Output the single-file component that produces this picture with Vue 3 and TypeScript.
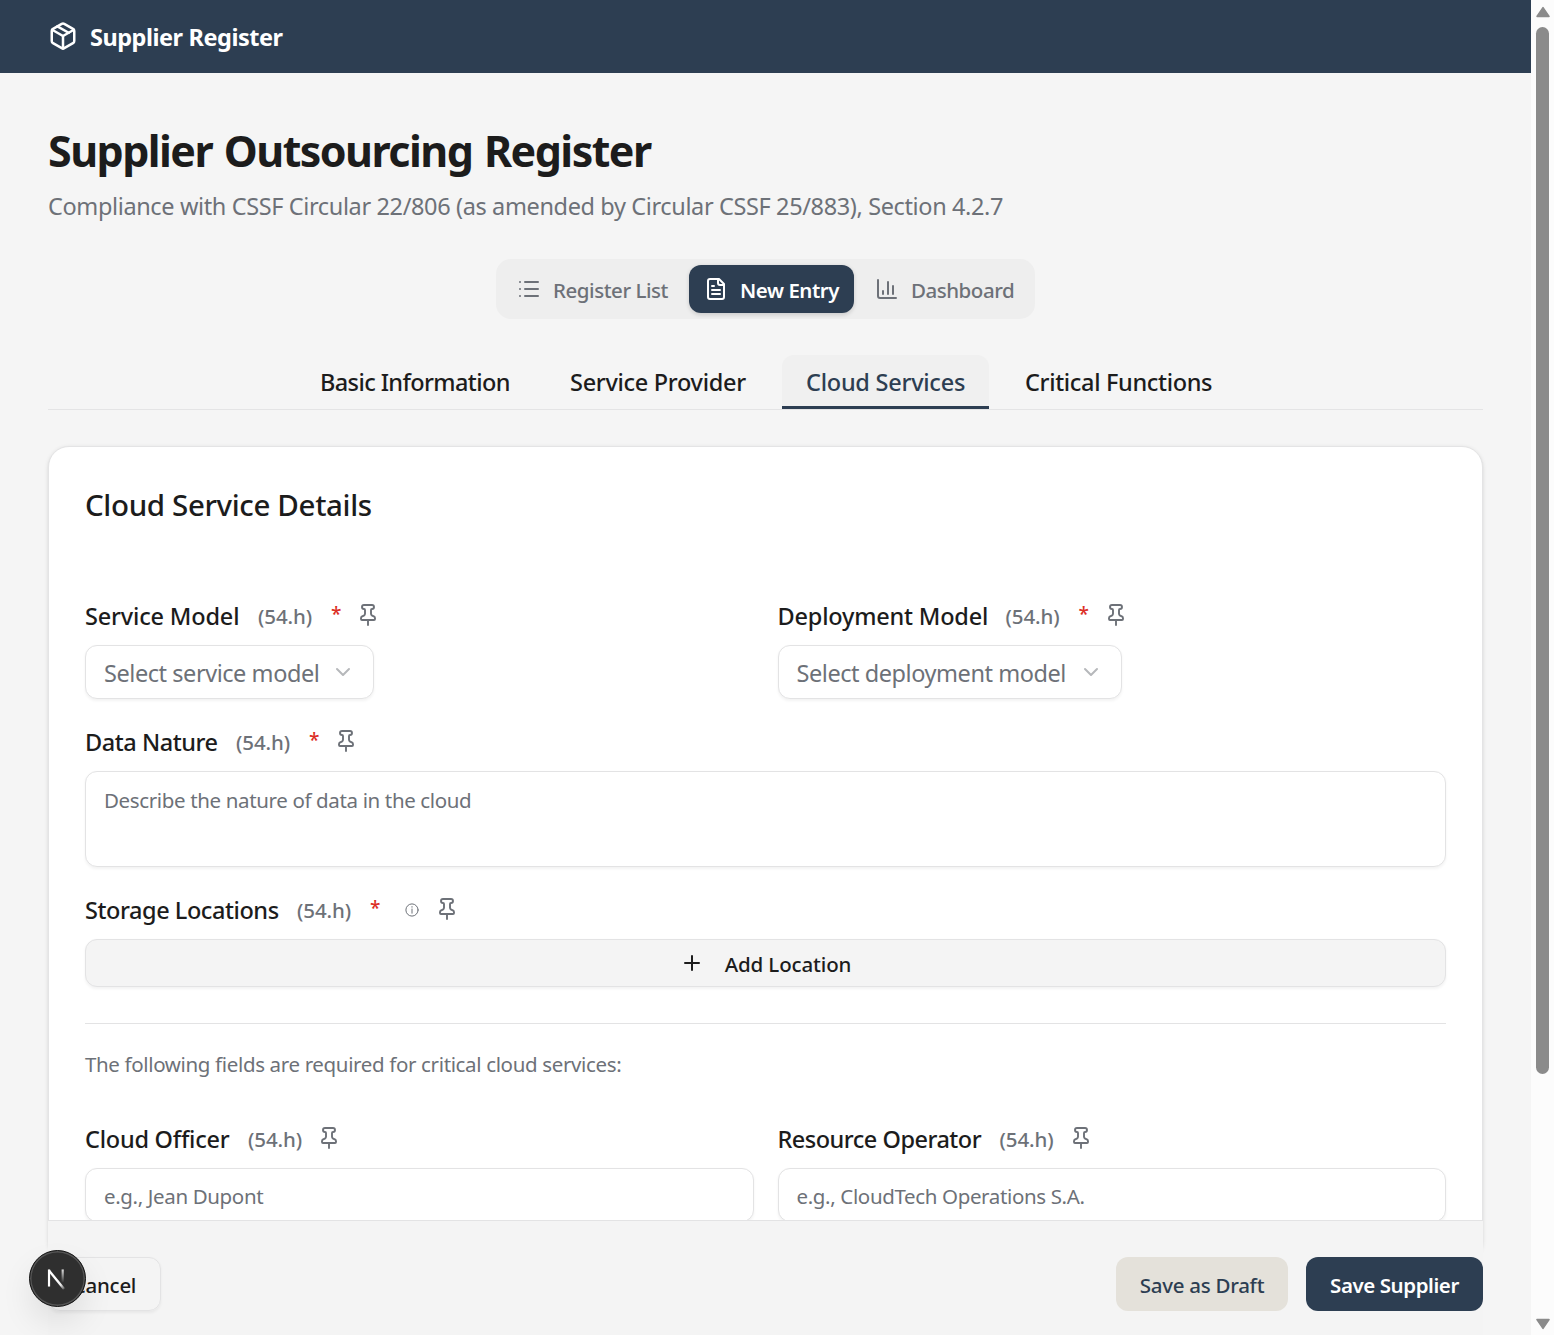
<script setup lang="ts">
interface Tab { label: string; icon: string; cls: string; active?: boolean }
interface Step { label: string; cls: string; active?: boolean }

const tabs: Tab[] = [
  { label: 'Register List', icon: 'list', cls: 'tab-list' },
  { label: 'New Entry', icon: 'file', cls: 'tab-entry', active: true },
  { label: 'Dashboard', icon: 'chart', cls: 'tab-dash' },
]

const steps: Step[] = [
  { label: 'Basic Information', cls: 'step-basic' },
  { label: 'Service Provider', cls: 'step-provider' },
  { label: 'Cloud Services', cls: 'step-cloud', active: true },
  { label: 'Critical Functions', cls: 'step-critical' },
]

const icons: Record<string, string[]> = {
  list: ['M3 5h.01', 'M3 12h.01', 'M3 19h.01', 'M8 5h13', 'M8 12h13', 'M8 19h13'],
  file: [
    'M15 2H6a2 2 0 0 0-2 2v16a2 2 0 0 0 2 2h12a2 2 0 0 0 2-2V7Z',
    'M14 2v4a2 2 0 0 0 2 2h4',
    'M10 9H8',
    'M16 13H8',
    'M16 17H8',
  ],
  chart: ['M3 3v16a2 2 0 0 0 2 2h16', 'M18 17V9', 'M13 17V5', 'M8 17v-3'],
}

const pin = [
  'M12 17v5',
  'M9 10.76a2 2 0 0 1-1.11 1.79l-1.78.9A2 2 0 0 0 5 15.24V16a1 1 0 0 0 1 1h12a1 1 0 0 0 1-1v-.76a2 2 0 0 0-1.11-1.79l-1.78-.9A2 2 0 0 1 15 10.76V7a1 1 0 0 1 1-1 2 2 0 0 0 0-4H8a2 2 0 0 0 0 4 1 1 0 0 1 1 1z',
]
</script>

<template>
  <div class="window">
    <div class="page">
      <header class="topbar">
        <svg class="logo" viewBox="0 0 24 24">
          <path d="M11 21.73a2 2 0 0 0 2 0l7-4A2 2 0 0 0 21 16V8a2 2 0 0 0-1-1.73l-7-4a2 2 0 0 0-2 0l-7 4A2 2 0 0 0 3 8v8a2 2 0 0 0 1 1.73z" />
          <path d="M12 22V12" />
          <path d="m3.3 7 8.7 5 8.7-5" />
          <path d="m7.5 4.27 9 5.15" />
        </svg>
        <span class="brand">Supplier Register</span>
      </header>

      <main class="content">
        <h1>Supplier Outsourcing Register</h1>
        <p class="subtitle">Compliance with CSSF Circular 22/806 (as amended by Circular CSSF 25/883), Section 4.2.7</p>

        <nav class="tabs">
          <button v-for="t in tabs" :key="t.label" class="tab" :class="[t.cls, { active: t.active }]">
            <svg class="icon" viewBox="0 0 24 24"><path v-for="d in icons[t.icon]" :key="d" :d="d" /></svg>
            <span>{{ t.label }}</span>
          </button>
        </nav>

        <nav class="steps">
          <button v-for="s in steps" :key="s.label" class="step" :class="[s.cls, { active: s.active }]">{{ s.label }}</button>
        </nav>

        <section class="card">
          <h2>Cloud Service Details</h2>

          <div class="row">
            <div class="field">
              <div class="label">
                <span class="name n-service">Service Model</span><span class="ref">(54.h)</span><span class="star">*</span>
                <svg class="icon pin" viewBox="0 0 24 24"><path v-for="d in pin" :key="d" :d="d" /></svg>
              </div>
              <button class="select s-service"><span>Select service model</span>
                <svg class="icon" viewBox="0 0 24 24"><path d="m6 9 6 6 6-6" /></svg>
              </button>
            </div>
            <div class="field">
              <div class="label">
                <span class="name n-deploy">Deployment Model</span><span class="ref">(54.h)</span><span class="star">*</span>
                <svg class="icon pin" viewBox="0 0 24 24"><path v-for="d in pin" :key="d" :d="d" /></svg>
              </div>
              <button class="select s-deploy"><span>Select deployment model</span>
                <svg class="icon" viewBox="0 0 24 24"><path d="m6 9 6 6 6-6" /></svg>
              </button>
            </div>
          </div>

          <div class="field">
            <div class="label">
              <span class="name n-data">Data Nature</span><span class="ref">(54.h)</span><span class="star">*</span>
              <svg class="icon pin" viewBox="0 0 24 24"><path v-for="d in pin" :key="d" :d="d" /></svg>
            </div>
            <div class="box area"><span>Describe the nature of data in the cloud</span></div>
          </div>

          <div class="field">
            <div class="label">
              <span class="name n-storage">Storage Locations</span><span class="ref">(54.h)</span><span class="star">*</span>
              <svg class="info" viewBox="0 0 14 14"><circle cx="7" cy="7" r="6.1" /><path d="M7 6v4.2M7 3.6v.6" /></svg>
              <svg class="icon pin after-info" viewBox="0 0 24 24"><path v-for="d in pin" :key="d" :d="d" /></svg>
            </div>
            <button class="add">
              <svg class="icon" viewBox="0 0 24 24"><path d="M5 12h14M12 5v14" /></svg>
              <span>Add Location</span>
            </button>
          </div>

          <div class="critical">
            <p>The following fields are required for critical cloud services:</p>
            <div class="row">
              <div class="field">
                <div class="label">
                  <span class="name n-officer">Cloud Officer</span><span class="ref">(54.h)</span>
                  <svg class="icon pin" viewBox="0 0 24 24"><path v-for="d in pin" :key="d" :d="d" /></svg>
                </div>
                <div class="box input"><span>e.g., Jean Dupont</span></div>
              </div>
              <div class="field">
                <div class="label">
                  <span class="name n-resource">Resource Operator</span><span class="ref">(54.h)</span>
                  <svg class="icon pin" viewBox="0 0 24 24"><path v-for="d in pin" :key="d" :d="d" /></svg>
                </div>
                <div class="box input"><span>e.g., CloudTech Operations S.A.</span></div>
              </div>
            </div>
          </div>
        </section>
      </main>

      <footer class="actions">
        <button class="btn cancel"><span>Cancel</span></button>
        <button class="btn draft"><span>Save as Draft</span></button>
        <button class="btn save"><span>Save Supplier</span></button>
      </footer>

      <div class="devtools">
        <svg viewBox="0 0 40 40">
          <defs>
            <linearGradient id="diag" x1="20" y1="22" x2="28.5" y2="32" gradientUnits="userSpaceOnUse">
              <stop stop-color="#fff" /><stop offset="0.5" stop-color="#fff" stop-opacity="0.9" /><stop offset="1" stop-color="#fff" stop-opacity="0.1" />
            </linearGradient>
            <linearGradient id="stem" x1="26" y1="11" x2="26" y2="25" gradientUnits="userSpaceOnUse">
              <stop stop-color="#fff" stop-opacity="0.85" /><stop offset="1" stop-color="#fff" stop-opacity="0" />
            </linearGradient>
          </defs>
          <path d="M11.6 12.2 27.4 31.6" fill="none" stroke="url(#diag)" stroke-width="2.5" />
          <path d="M11.6 29V11" fill="none" stroke="#fff" stroke-width="2.3" />
          <path d="M26 11V25" fill="none" stroke="url(#stem)" stroke-width="2.3" />
        </svg>
      </div>
    </div>

    <div class="scrollbar">
      <svg class="arrow" viewBox="0 0 14 11"><path d="M7 1.5 12.5 9.5H1.5Z" /></svg>
      <div class="thumb"></div>
      <svg class="arrow" viewBox="0 0 14 11"><path d="M7 9.5 12.5 1.5H1.5Z" /></svg>
    </div>
  </div>
</template>

<style>
body { margin: 0; background: #f5f5f5; overflow: hidden; }
</style>

<style scoped>
.window { display: flex; width: 1554px; height: 1335px; overflow: hidden; font-family: "Noto Sans", "Open Sans", sans-serif; color: #1c1c1c; }
.window * { box-sizing: border-box; }
button { font: inherit; color: inherit; border: 0; background: none; padding: 0; margin: 0; white-space: nowrap; }
h1, h2, p { margin: 0; white-space: nowrap; }
svg { display: block; flex: none; fill: none; stroke: currentColor; stroke-width: 2; stroke-linecap: round; stroke-linejoin: round; }
.icon { width: 24px; height: 24px; }

.page { position: relative; width: 1531px; height: 1335px; overflow: hidden; background: #f5f5f5; }
.topbar { display: flex; align-items: center; height: 73px; padding: 0 48px 1px; background: #2d3e52; color: #fff; }
.logo { width: 30px; height: 30px; }
.brand { margin: 1px 0 0 12px; font-size: 23.5px; font-weight: 700; line-height: 32px; letter-spacing: -0.5px; word-spacing: 0.5px; }

.content { padding: 48px 48px 0; }
h1 { height: 63px; font-size: 43px; font-weight: 700; line-height: 60px; letter-spacing: -1.55px; word-spacing: 2px; }
.subtitle { height: 36px; margin-top: 5px; color: #6d7178; font-size: 23.5px; line-height: 35px; letter-spacing: -0.37px; }

.tabs { display: flex; gap: 6px; width: 539px; height: 60px; margin: 34px auto 0; padding: 6px; border-radius: 15px; background: #eeeeee; }
.tab { display: flex; align-items: center; height: 48px; padding: 0 0 0 15px; border-radius: 12px; color: #6d7178; font-size: 20.5px; font-weight: 500; }
.tab span { margin: 2px 0 0 12px; line-height: 27px; }
.tab.active { background: #2d3e52; color: #fff; font-weight: 600; box-shadow: 0 1.5px 4px rgba(0, 0, 0, 0.14); }
.tab-list { width: 181px; letter-spacing: -0.45px; }
.tab-entry { width: 165px; letter-spacing: -0.45px; }
.tab-dash { width: 169px; letter-spacing: -0.48px; }

.steps { display: flex; justify-content: center; gap: 12px; height: 55px; margin-top: 36px; border-bottom: 1px solid #e4e4e5; }
.step { height: 54px; padding: 1px 24px 0; border-radius: 12px 12px 0 0; font-size: 23.5px; font-weight: 500; line-height: 49px; text-align: left; }
.step.active { background: linear-gradient(#2d3e52, #2d3e52) bottom / 100% 3px no-repeat, #f0f0f0; color: #2d3e52; }
.step-basic { width: 239px; padding-left: 25px; letter-spacing: -0.6px; }
.step-provider { width: 224px; letter-spacing: -0.3px; }
.step-cloud { width: 207px; letter-spacing: -0.25px; }
.step-critical { width: 235px; letter-spacing: -0.34px; }

.card { height: 814px; margin-top: 36px; padding: 36px; border: 1px solid #e4e4e5; border-radius: 21px; background: #fff; box-shadow: 0 1.5px 4.5px rgba(0, 0, 0, 0.1), 0 1.5px 3px -1.5px rgba(0, 0, 0, 0.1); }
h2 { height: 117px; font-size: 29.5px; font-weight: 500; line-height: 43px; letter-spacing: -0.36px; }
.row { display: flex; gap: 24px; }
.row .field { flex: 1; min-width: 0; }
.field { margin-bottom: 27px; }
.label { display: flex; height: 45px; line-height: 32px; white-space: nowrap; }
.name { font-size: 23.5px; font-weight: 500; }
.ref { width: 57px; margin-left: 18px; color: #6d7178; font-size: 20.5px; font-weight: 500; letter-spacing: -0.1px; }
.star { width: 12px; margin-left: 16px; color: #dc2f26; font-size: 19px; font-weight: 500; line-height: 29px; }
.pin { margin: 3px 0 0 12px; color: #6d7178; stroke-width: 1.9; }
.star + .pin { margin-left: 13px; }
.info { width: 14px; height: 14px; margin-top: 9px; color: #6d7178; stroke-width: 1; }
.star + .info { margin-left: 23px; }
.after-info { margin-left: 16px; }
.n-service { width: 155px; letter-spacing: -0.17px; }
.n-deploy { width: 210px; letter-spacing: -0.2px; }
.n-data { width: 133px; letter-spacing: -0.45px; }
.n-storage { width: 194px; letter-spacing: -0.44px; }
.n-officer { width: 145px; letter-spacing: -0.24px; }
.n-resource { width: 204px; letter-spacing: -0.5px; }

.select, .box, .add { border: 1px solid #e3e3e4; border-radius: 12px; box-shadow: 0 1.5px 3px rgba(0, 0, 0, 0.05); }
.select { display: flex; align-items: center; justify-content: space-between; height: 54px; padding: 0 18px; background: #fff; color: #6d7178; font-size: 23.5px; line-height: 32px; letter-spacing: -0.44px; }
.select span { margin-top: 2px; }
.select .icon { color: #b6b8bb; }
.s-service { width: 289px; }
.s-deploy { width: 344px; }
.box { height: 54px; padding: 13px 18px 0; background: #fff; color: #6d7178; font-size: 20.5px; line-height: 30px; letter-spacing: -0.36px; white-space: nowrap; }
.area { height: 96px; }
.input { padding-top: 12px; }
.add { display: flex; align-items: center; justify-content: center; width: 100%; height: 48px; background: #f4f4f4; font-size: 20.5px; font-weight: 500; letter-spacing: -0.13px; }
.add span { margin: 2px 0 0 21px; line-height: 28px; }
.critical { margin-top: 36px; border-top: 1px solid #e3e3e4; }
.critical p { height: 99px; padding-top: 25px; color: #6d7178; font-size: 20.5px; line-height: 30px; letter-spacing: -0.35px; }

.actions { position: absolute; left: 48px; right: 48px; bottom: 0; display: flex; height: 115px; padding-top: 36px; border-top: 1px solid #e3e3e4; background: #f4f4f4; }
.btn { height: 54px; border-radius: 12px; font-size: 20.5px; font-weight: 500; letter-spacing: -0.28px; }
.btn span { position: relative; top: 1px; }
.cancel { width: 113px; border: 1px solid #e3e3e4; box-shadow: 0 1.5px 3px rgba(0, 0, 0, 0.05); }
.draft { width: 172px; margin-left: auto; background: #e4e1da; color: #2d3e52; }
.save { width: 177px; margin-left: 18px; background: #2d3e52; color: #fff; font-weight: 600; letter-spacing: -0.42px; }

.devtools { position: absolute; left: 28.5px; top: 1249.5px; width: 57px; height: 57px; padding: 8px; border: 1.5px solid #151515; border-radius: 50%; background: #2f2f2f; box-shadow: inset 0 0 0 1.5px #545454, 0 16px 36px -6px rgba(0, 0, 0, 0.14); }
.devtools svg { width: 38px; height: 38px; stroke-linecap: butt; stroke-linejoin: miter; }

.scrollbar { display: flex; flex-direction: column; align-items: center; width: 23px; padding: 6px 0 5px; background: #fcfcfc; }
.arrow { width: 16px; height: 12px; fill: #8b8b8b; stroke: #8b8b8b; stroke-width: 1.5; }
.thumb { width: 13px; height: 1047px; margin: 9px 0 auto; border-radius: 7px; background: #8b8b8b; }
</style>
